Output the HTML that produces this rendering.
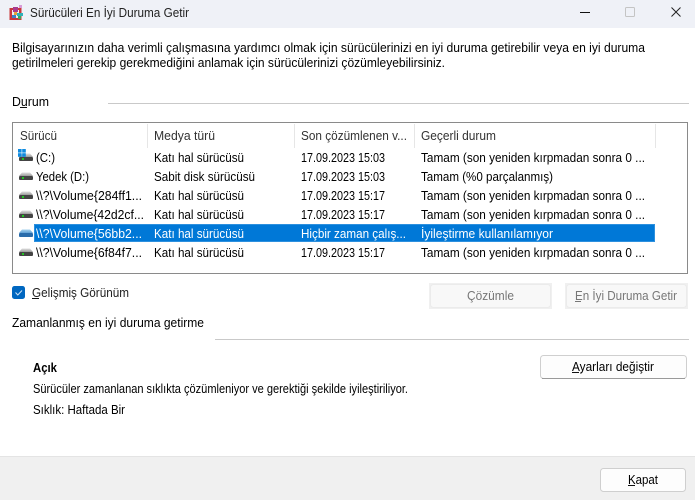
<!DOCTYPE html>
<html><head><meta charset="utf-8"><style>
html,body{margin:0;padding:0;background:#fff;width:695px;height:500px;overflow:hidden}
svg{display:block}
text{font-family:"Liberation Sans","DejaVu Sans",sans-serif;font-size:12.5px;fill:#000}
.w{fill:#fff}.d{fill:#777}
</style></head><body>
<svg width="695" height="500" viewBox="0 0 695 500" xmlns="http://www.w3.org/2000/svg">
<defs>
<linearGradient id="tp" x1="0" y1="0" x2="0" y2="1"><stop offset="0" stop-color="#e2e2e2"/><stop offset="1" stop-color="#9a9a9a"/></linearGradient>
<linearGradient id="tb" x1="0" y1="0" x2="0" y2="1"><stop offset="0" stop-color="#a9d4f0"/><stop offset="1" stop-color="#5f9fd4"/></linearGradient>
<g id="drv"><path d="M3 0.5H11L14 4H0Z" fill="url(#tp)"/><rect x="0" y="4" width="14" height="4" rx="1" fill="#444"/><rect x="3" y="5" width="2" height="2" fill="#22c522"/></g>
<g id="drvs"><path d="M3 0.5H11L14 4H0Z" fill="url(#tb)"/><rect x="0" y="4" width="14" height="4" rx="1" fill="#2a6cab"/></g>
</defs>
<rect x="0" y="0" width="695" height="28" fill="#eff1f7"/>
<g><rect x="9.5" y="8" width="12" height="12" fill="#c8373a"/><rect x="12" y="10" width="7" height="8" fill="#eee"/><rect x="13" y="7" width="5" height="5" fill="#a83a8e"/><rect x="14" y="12" width="3" height="3" fill="#e8a33a"/><rect x="17" y="13" width="6" height="3" fill="#2fb0b8"/><rect x="18" y="16" width="3" height="3" fill="#3aa65a"/><rect x="19" y="5" width="3" height="3" fill="#d99ad8"/><rect x="12" y="15" width="4" height="3" fill="#3d7fc4"/></g>
<text x="30" y="17" textLength="159" lengthAdjust="spacingAndGlyphs" style="fill:#222">Sürücüleri En İyi Duruma Getir</text>
<rect x="580" y="12" width="10" height="1" fill="#111"/>
<rect x="625.5" y="7.5" width="9" height="9" rx="1" fill="none" stroke="#c4c4c4"/>
<path d="M671.5 7.5L680.5 16.5M680.5 7.5L671.5 16.5" stroke="#222" fill="none"/>

<text x="12" y="52" textLength="633" lengthAdjust="spacingAndGlyphs">Bilgisayarınızın daha verimli çalışmasına yardımcı olmak için sürücülerinizi en iyi duruma getirebilir veya en iyi duruma</text>
<text x="12" y="67" textLength="433" lengthAdjust="spacingAndGlyphs">getirilmeleri gerekip gerekmediğini anlamak için sürücülerinizi çözümleyebilirsiniz.</text>

<text x="12" y="106" textLength="37" lengthAdjust="spacingAndGlyphs">Durum</text>
<rect x="20" y="107" width="7" height="1" fill="#111"/>
<rect x="108" y="103" width="581" height="1" fill="#c9c9c9"/>

<rect x="12.5" y="122.5" width="675" height="151" fill="#fff" stroke="#8a8a8a"/>
<rect x="147" y="124" width="1" height="24" fill="#e6e6e6"/>
<rect x="294" y="124" width="1" height="24" fill="#e6e6e6"/>
<rect x="414" y="124" width="1" height="24" fill="#e6e6e6"/>
<rect x="655" y="124" width="1" height="24" fill="#e6e6e6"/>
<text x="20" y="140" textLength="37" lengthAdjust="spacingAndGlyphs" style="fill:#333">Sürücü</text>
<text x="154" y="140" textLength="61" lengthAdjust="spacingAndGlyphs" style="fill:#333">Medya türü</text>
<text x="301" y="140" textLength="106" lengthAdjust="spacingAndGlyphs" style="fill:#333">Son çözümlenen v...</text>
<text x="421" y="140" textLength="75" lengthAdjust="spacingAndGlyphs" style="fill:#333">Geçerli durum</text>

<rect x="34" y="224" width="621" height="18" fill="#0078d7"/>
<rect x="34.5" y="224.5" width="620" height="17" fill="none" stroke="#5aa9e6" stroke-dasharray="1 1"/>

<use href="#drv" x="19" y="153"/>
<rect x="18" y="149" width="3.6" height="3.6" fill="#0f8be0"/><rect x="22.2" y="149" width="3.6" height="3.6" fill="#0f8be0"/><rect x="18" y="153.2" width="3.6" height="3.6" fill="#0f8be0"/><rect x="22.2" y="153.2" width="3.6" height="3.6" fill="#0f8be0"/>
<use href="#drv" x="19" y="172"/>
<use href="#drv" x="19" y="191"/>
<use href="#drv" x="19" y="210"/>
<use href="#drvs" x="19" y="229"/>
<use href="#drv" x="19" y="248"/>

<text x="36" y="162" textLength="19" lengthAdjust="spacingAndGlyphs">(C:)</text>
<text x="36" y="181" textLength="53" lengthAdjust="spacingAndGlyphs">Yedek (D:)</text>
<text x="36" y="200" textLength="106" lengthAdjust="spacingAndGlyphs">\\?\Volume{284ff1...</text>
<text x="36" y="219" textLength="108" lengthAdjust="spacingAndGlyphs">\\?\Volume{42d2cf...</text>
<text x="36" y="238" textLength="106" lengthAdjust="spacingAndGlyphs" class="w">\\?\Volume{56bb2...</text>
<text x="36" y="257" textLength="106" lengthAdjust="spacingAndGlyphs">\\?\Volume{6f84f7...</text>

<text x="154" y="162" textLength="90" lengthAdjust="spacingAndGlyphs">Katı hal sürücüsü</text>
<text x="154" y="181" textLength="101" lengthAdjust="spacingAndGlyphs">Sabit disk sürücüsü</text>
<text x="154" y="200" textLength="90" lengthAdjust="spacingAndGlyphs">Katı hal sürücüsü</text>
<text x="154" y="219" textLength="90" lengthAdjust="spacingAndGlyphs">Katı hal sürücüsü</text>
<text x="154" y="238" textLength="90" lengthAdjust="spacingAndGlyphs" class="w">Katı hal sürücüsü</text>
<text x="154" y="257" textLength="90" lengthAdjust="spacingAndGlyphs">Katı hal sürücüsü</text>

<text x="301" y="162" textLength="84" lengthAdjust="spacingAndGlyphs">17.09.2023 15:03</text>
<text x="301" y="181" textLength="84" lengthAdjust="spacingAndGlyphs">17.09.2023 15:03</text>
<text x="301" y="200" textLength="84" lengthAdjust="spacingAndGlyphs">17.09.2023 15:17</text>
<text x="301" y="219" textLength="84" lengthAdjust="spacingAndGlyphs">17.09.2023 15:17</text>
<text x="301" y="238" textLength="105" lengthAdjust="spacingAndGlyphs" class="w">Hiçbir zaman çalış...</text>
<text x="301" y="257" textLength="84" lengthAdjust="spacingAndGlyphs">17.09.2023 15:17</text>

<text x="421" y="162" textLength="224" lengthAdjust="spacingAndGlyphs">Tamam (son yeniden kırpmadan sonra 0 ...</text>
<text x="421" y="181" textLength="132" lengthAdjust="spacingAndGlyphs">Tamam (%0 parçalanmış)</text>
<text x="421" y="200" textLength="224" lengthAdjust="spacingAndGlyphs">Tamam (son yeniden kırpmadan sonra 0 ...</text>
<text x="421" y="219" textLength="224" lengthAdjust="spacingAndGlyphs">Tamam (son yeniden kırpmadan sonra 0 ...</text>
<text x="421" y="238" textLength="132" lengthAdjust="spacingAndGlyphs" class="w">İyileştirme kullanılamıyor</text>
<text x="421" y="257" textLength="224" lengthAdjust="spacingAndGlyphs">Tamam (son yeniden kırpmadan sonra 0 ...</text>

<rect x="12" y="286" width="13" height="13" rx="2.5" fill="#0067c0"/>
<path d="M15.5 292.5L17.8 295L22 290.5" fill="none" stroke="#cfe3f5" stroke-width="1"/>
<text x="32" y="297" textLength="97" lengthAdjust="spacingAndGlyphs" style="fill:#222">Gelişmiş Görünüm</text>
<rect x="32" y="298" width="7" height="1" fill="#111"/>

<rect x="429" y="283" width="123" height="26" fill="#f0f0f0"/>
<rect x="430.5" y="284.5" width="120" height="23" rx="3" fill="#f8f8f8" stroke="#ebebeb"/>
<text x="467" y="300" textLength="47" lengthAdjust="spacingAndGlyphs" class="d">Çözümle</text>
<rect x="565" y="283" width="123" height="26" fill="#f0f0f0"/>
<rect x="566.5" y="284.5" width="120" height="23" rx="3" fill="#f8f8f8" stroke="#ebebeb"/>
<text x="575" y="300" textLength="102" lengthAdjust="spacingAndGlyphs" class="d">En İyi Duruma Getir</text>
<rect x="575" y="301" width="6" height="1" fill="#777"/>

<text x="12" y="327" textLength="192" lengthAdjust="spacingAndGlyphs">Zamanlanmış en iyi duruma getirme</text>
<rect x="215" y="339" width="474" height="1" fill="#c9c9c9"/>

<text x="33" y="372" textLength="24" lengthAdjust="spacingAndGlyphs" font-weight="bold">Açık</text>
<text x="33" y="393" textLength="375" lengthAdjust="spacingAndGlyphs">Sürücüler zamanlanan sıklıkta çözümleniyor ve gerektiği şekilde iyileştiriliyor.</text>
<text x="33" y="414" textLength="92" lengthAdjust="spacingAndGlyphs">Sıklık: Haftada Bir</text>

<rect x="540.5" y="355.5" width="146" height="23" rx="3" fill="#fdfdfd" stroke="#cfcfcf"/>
<path d="M542 378.5H685" stroke="#9a9a9a" fill="none"/>
<text x="572" y="371" textLength="82" lengthAdjust="spacingAndGlyphs">Ayarları değiştir</text>
<rect x="572" y="372" width="7" height="1" fill="#111"/>

<rect x="0" y="457" width="695" height="43" fill="#f0f0f0"/>
<rect x="0" y="456" width="695" height="1" fill="#e4e4e4"/>
<rect x="600.5" y="468.5" width="85" height="23" rx="3" fill="#fdfdfd" stroke="#cfcfcf"/>
<text x="628" y="484" textLength="30" lengthAdjust="spacingAndGlyphs">Kapat</text>
<rect x="628" y="485" width="7" height="1" fill="#111"/>
</svg>
</body></html>
